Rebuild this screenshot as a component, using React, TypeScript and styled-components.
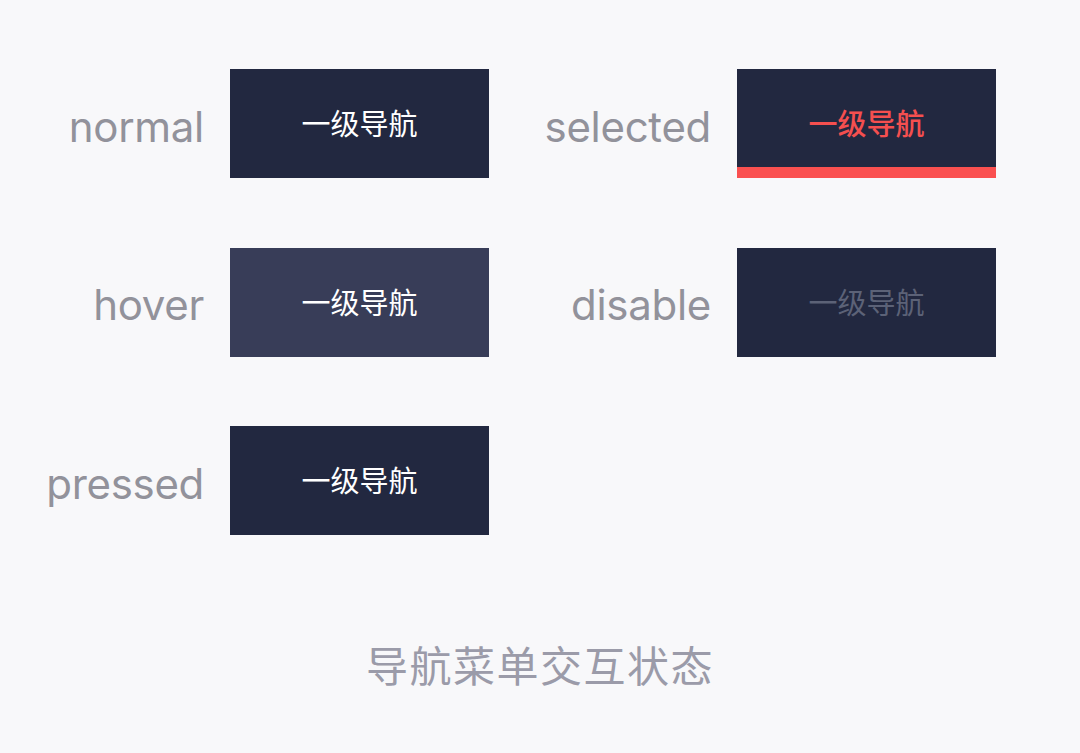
import React from "react";
import styled, { createGlobalStyle, css } from "styled-components";

const GlobalStyle = createGlobalStyle`
  html, body {
    margin: 0;
    padding: 0;
    background: #f8f8fa;
  }
  body {
    font-family: Inter, "Noto Sans CJK SC", sans-serif;
  }
`;

const Page = styled.main`
  width: 1080px;
  height: 753px;
  box-sizing: border-box;
  padding-top: 69px;
  display: flex;
  flex-direction: column;
  background: #f8f8fa;
`;

const StateGrid = styled.div`
  display: grid;
  grid-template-columns: 203px 259px 194px 259px;
  grid-auto-rows: 109px;
  column-gap: 27px;
  row-gap: 69.5px;
`;

const StateLabel = styled.span`
  align-self: center;
  justify-self: end;
  margin-right: -1px;
  font-family: Inter, "Noto Sans", sans-serif;
  font-size: 42px;
  font-weight: 400;
  letter-spacing: -0.3px;
  color: #92929b;
  line-height: 1;
  padding-top: 6px;
`;

type NavState = "normal" | "hover" | "pressed" | "selected" | "disable";

const NavItem = styled.div<{ $state: NavState }>`
  position: relative;
  display: flex;
  align-items: center;
  justify-content: center;
  background: ${(p) => (p.$state === "hover" ? "#383d58" : "#222840")};
  color: #ffffff;
  font-family: "Noto Sans CJK SC", sans-serif;
  font-size: 29px;
  font-weight: 400;
  line-height: 1;
  padding-bottom: 2px;
  box-sizing: border-box;

  ${(p) =>
    p.$state === "selected" &&
    css`
      color: #f54f4f;
      font-weight: 500;
      &::after {
        content: "";
        position: absolute;
        left: 0;
        right: 0;
        bottom: 0;
        height: 11px;
        background: #fa5050;
      }
    `}

  ${(p) =>
    p.$state === "disable" &&
    css`
      color: #5c6277;
    `}
`;

const Caption = styled.div`
  margin-top: 108px;
  text-align: center;
  font-family: "Noto Sans CJK SC", sans-serif;
  font-size: 42px;
  line-height: 1;
  color: #9b9ba9;
  letter-spacing: 1.5px;
`;

const Empty = styled.div``;

const cells: (NavState | null)[] = [
  "normal",
  "selected",
  "hover",
  "disable",
  "pressed",
  null,
];

export default function App() {
  return (
    <>
      <GlobalStyle />
      <Page>
        <StateGrid>
          {cells.map((state, i) =>
            state ? (
              <React.Fragment key={state}>
                <StateLabel>{state}</StateLabel>
                <NavItem $state={state}>一级导航</NavItem>
              </React.Fragment>
            ) : (
              <React.Fragment key={`empty-${i}`}>
                <Empty />
                <Empty />
              </React.Fragment>
            )
          )}
        </StateGrid>
        <Caption>导航菜单交互状态</Caption>
      </Page>
    </>
  );
}
